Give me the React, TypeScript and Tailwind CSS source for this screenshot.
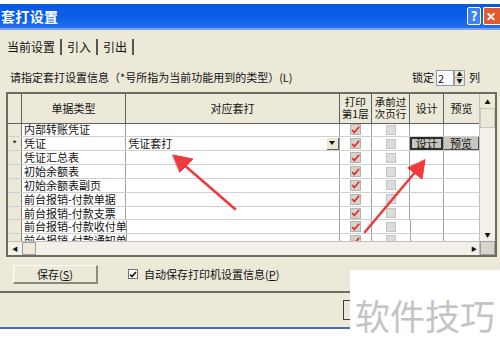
import React from "react"

const rows = [
  "内部转账凭证",
  "凭证",
  "凭证汇总表",
  "初始余额表",
  "初始余额表副页",
  "前台报销-付款单据",
  "前台报销-付款支票",
  "前台报销-付款收付单",
]

function RedCheck() {
  return (
    <div className="w-[11px] h-[11px] bg-[#d6d3ca] border border-[#b5b2a8] flex items-center justify-center">
      <svg width="11" height="10" viewBox="0 0 11 10">
        <path d="M1.5 5 L4 8 L10 1" stroke="#e0262a" strokeWidth="2" fill="none" />
      </svg>
    </div>
  )
}

function GrayBox() {
  return <div className="w-[10px] h-[10px] bg-[#dcdcdc] border border-[#c4c4c4]" />
}

function DataRow({ name, i }: { name: string; i: number }) {
  const active = i === 1
  return (
    <div className="flex h-[14px] border-b border-[#d0d0d0]">
      <div className="w-[14px] bg-[#ece9d8] border-r border-[#808080] text-[10px] leading-[13px] text-center">
        {active ? "*" : ""}
      </div>
      <div className="w-[105px] border-r border-[#a0a0a0] pl-[2px] flex items-center text-[11px] leading-none whitespace-nowrap">
        {name}
      </div>
      <div className="w-[215px] border-r border-[#a0a0a0] flex items-center justify-between pl-[2px]">
        <span className="text-[11px] leading-none">{active ? "凭证套打" : ""}</span>
        {active && (
          <div className="w-[12px] h-[12px] bg-[#ece9d8] border-r border-b border-[#606060] flex items-center justify-center">
            <svg width="6" height="4" viewBox="0 0 6 4">
              <path d="M0 0 H6 L3 4 Z" fill="#111" />
            </svg>
          </div>
        )}
      </div>
      <div className="w-[32px] border-r border-[#a0a0a0] flex items-center justify-center">
        <RedCheck />
      </div>
      <div className="w-[39px] border-r border-[#a0a0a0] flex items-center justify-center">
        <GrayBox />
      </div>
      <div className="w-[34px] border-r border-[#a0a0a0] flex">
        {active && (
          <div className="flex-1 bg-[#c8c6c0] border-2 border-[#303030] flex items-center justify-center text-[11px] leading-none">设计</div>
        )}
      </div>
      <div className="w-[35px] flex">
        {active && (
          <div className="flex-1 bg-[#c8c6c0] border-r border-b border-[#505050] flex items-center justify-center text-[11px] leading-none">预览</div>
        )}
      </div>
    </div>
  )
}

export default function App() {
  return (
    <div
      className="w-[500px] h-[345px] relative overflow-hidden bg-white text-[#111]"
      style={{ fontFamily: '"Noto Sans CJK SC", "Noto Sans", sans-serif' }}
    >
      <div className="h-[4px] bg-white" />
      {/* title bar */}
      <div className="h-[26px] bg-gradient-to-b from-[#0a5ae0] via-[#0a5de6] to-[#2270ee] flex items-center justify-between border-b-2 border-[#7fa3e8]">
        <span className="text-white text-[14px] font-bold pl-[1px] tracking-wide">套打设置</span>
        <div className="flex items-center gap-[2px] h-full">
          <div className="w-[14px] h-[18px] rounded-[2px] bg-[#3d82f0] border border-white text-white text-[13px] font-bold leading-[16px] text-center">?</div>
          <div className="w-[17px] h-[18px] rounded-l-[2px] bg-[#e05a30] border border-white border-r-0 text-white text-[12px] font-bold leading-[16px] pl-[2px]">✕</div>
        </div>
      </div>
      {/* body */}
      <div className="h-[297px] bg-[#ece9d8] flex flex-col">
        {/* tabs */}
        <div className="flex items-end h-[25px] pl-[7px] text-[12px] leading-[16px]">
          <span className="pr-[5px] border-r-2 border-[#555]">当前设置</span>
          <span className="px-[5px] border-r-2 border-[#555]">引入</span>
          <span className="px-[5px] border-r-2 border-[#555]">引出</span>
        </div>
        {/* instruction */}
        <div className="flex items-center justify-between h-[37px] pl-[10px] pr-[20px] pt-[8px]">
          <span className="text-[11px]">请指定套打设置信息（*号所指为当前功能用到的类型）(L)</span>
          <div className="flex items-center text-[11px]">
            <span className="mr-[2px]">锁定</span>
            <div className="w-[18px] h-[16px] bg-white border border-[#7f9db9] text-[11px] leading-[14px] pl-[1px]">2</div>
            <div className="w-[11px] h-[16px] flex flex-col border border-[#a0a0a0] bg-[#ece9d8]">
              <div className="flex-1 flex items-center justify-center text-[6px] leading-none border-b border-[#a0a0a0]">▲</div>
              <div className="flex-1 flex items-center justify-center text-[6px] leading-none">▼</div>
            </div>
            <span className="ml-[4px]">列</span>
          </div>
        </div>
        {/* grid */}
        <div className="ml-[6px] mr-[3px] h-[165px] border-2 border-[#6c6c64] flex">
          <div className="flex-1 flex flex-col bg-white overflow-hidden">
            <div className="flex h-[30px] bg-[#ece9d8] border-b border-[#606060] text-[11px]">
              <div className="w-[14px] border-r border-[#606060]" />
              <div className="w-[105px] border-r border-[#606060] flex items-center justify-center">单据类型</div>
              <div className="w-[215px] border-r border-[#606060] flex items-center justify-center">对应套打</div>
              <div className="w-[32px] border-r border-[#606060] flex flex-col items-center justify-center gap-[1px] text-[10.5px] leading-none">
                <span>打印</span>
                <span>第1层</span>
              </div>
              <div className="w-[39px] border-r border-[#606060] flex flex-col items-center justify-center gap-[1px] text-[10.5px] leading-none">
                <span>承前过</span>
                <span>次页行</span>
              </div>
              <div className="w-[34px] border-r border-[#606060] flex items-center justify-center">设计</div>
              <div className="w-[35px] flex items-center justify-center">预览</div>
            </div>
            {rows.map((r, i) => (
              <DataRow key={r} name={r} i={i} />
            ))}
            <div className="flex h-[7px] overflow-hidden">
              <div className="w-[14px] bg-[#ece9d8] border-r border-[#808080]" />
              <div className="w-[105px] border-r border-[#a0a0a0] pl-[2px] text-[11px] leading-[13px] whitespace-nowrap">前台报销-付款通知单</div>
              <div className="w-[215px] border-r border-[#a0a0a0]" />
              <div className="w-[32px] border-r border-[#a0a0a0] flex justify-center pt-[1px]">
                <RedCheck />
              </div>
              <div className="w-[39px] border-r border-[#a0a0a0] flex justify-center pt-[1px]">
                <GrayBox />
              </div>
              <div className="w-[34px] border-r border-[#a0a0a0]" />
              <div className="w-[35px]" />
            </div>
            {/* horizontal scrollbar */}
            <div className="flex h-[14px] bg-[#f2f0e8] border-t border-[#c0c0c0]">
              <div className="w-[14px] flex items-center justify-center text-[6px]">◀</div>
              <div className="w-[14px] bg-[#ece9d8] border border-[#a0a0a0]" />
              <div className="flex-1" />
              <div className="w-[10px] flex items-center justify-center text-[6px]">▶</div>
            </div>
          </div>
          {/* vertical scrollbar */}
          <div className="w-[16px] flex flex-col bg-[#f2f0e8] border-l border-[#c0c0c0]">
            <div className="h-[14px] flex items-center justify-center text-[6px] bg-[#ece9d8]">▲</div>
            <div className="h-[20px] bg-[#ece9d8] border border-[#c8c6bc]" />
            <div className="flex-1" />
            <div className="h-[14px] flex items-center justify-center text-[6px]">▼</div>
            <div className="h-[14px] bg-[#d8d5c8] border border-[#a0a0a0]" />
          </div>
        </div>
        {/* bottom row */}
        <div className="flex items-center h-[30px] pt-[4px] pl-[13px]">
          <div className="w-[85px] h-[19px] bg-[#ece9d8] border-r-2 border-b-2 border-[#8c8a80] border-t border-l border-t-white border-l-white text-[11px] leading-[16px] text-center">
            保存(<span className="underline">S</span>)
          </div>
          <div className="ml-[30px] w-[10px] h-[10px] bg-white border border-[#707070] flex items-center justify-center">
            <svg width="8" height="7" viewBox="0 0 8 7">
              <path d="M1 3.5 L3 5.5 L7 1" stroke="#111" strokeWidth="1.6" fill="none" />
            </svg>
          </div>
          <span className="ml-[6px] text-[11px]">自动保存打印机设置信息(<span className="underline">P</span>)</span>
        </div>
        <div className="h-[2px] bg-[#6e6c64] mt-[4px]" />
        <div className="flex-1 flex items-center pl-[343px]">
          <div className="w-[40px] h-[20px] border border-[#404040] bg-[#ece9d8]" />
        </div>
      </div>
      <div className="h-[2px] bg-[#4a6cb8]" />

      {/* red arrows */}
      <svg className="absolute left-0 top-0" width="500" height="345" viewBox="0 0 500 345">
        <g fill="#ee3a3a" stroke="#ee3a3a" strokeLinecap="round">
          <line x1="235" y1="209" x2="183" y2="164" strokeWidth="2.5" />
          <path d="M173 155 L193 159 L180 172 Z" />
          <line x1="365" y1="232" x2="417" y2="170" strokeWidth="2.5" />
          <path d="M425 160 L422 179 L408 168 Z" />
        </g>
      </svg>

      {/* watermark */}
      <div className="absolute left-[350px] top-[270px] w-[150px] h-[75px] bg-white flex items-center justify-center">
        <span className="text-[35px] leading-none text-[#c4c4c4] whitespace-nowrap mt-[14px]">软件技巧</span>
      </div>
    </div>
  )
}
